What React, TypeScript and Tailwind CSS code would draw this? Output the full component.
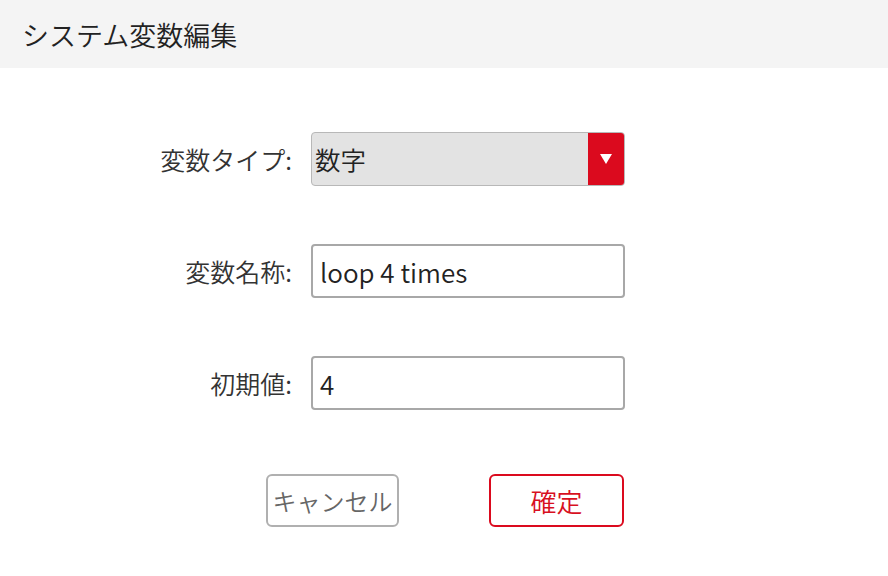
import React from "react";

const font = { fontFamily: '"Noto Sans CJK JP", "Noto Sans", sans-serif' };

function Row({ label, children }: { label: string; children: React.ReactNode }) {
  return (
    <div className="flex items-center">
      <div className="w-[292px] text-right text-[25px] font-[350] leading-none text-[#333]">{label}</div>
      <div className="ml-[19px] w-[314px] h-[54px]">{children}</div>
    </div>
  );
}

export default function App() {
  return (
    <div className="w-[888px] h-[576px] bg-white" style={font}>
      {/* Header */}
      <div className="h-[68px] bg-[#f4f4f4] flex items-center pl-[22px]">
        <span className="text-[27px] font-[350] text-[#222] leading-none">システム変数編集</span>
      </div>

      {/* Form */}
      <div className="mt-[64px] flex flex-col gap-[58px]">
        <Row label="変数タイプ:">
          <div className="flex h-full rounded-[4px] border border-[#b8b8b8] bg-[#e3e3e3] overflow-hidden">
            <div className="flex-1 flex items-center pl-[3px] text-[25.5px] font-[350] text-[#222]">数字</div>
            <div className="w-[36px] bg-[#db0a1e] flex items-center justify-center">
              <svg width="12" height="10" viewBox="0 0 12 10">
                <polygon points="0,0 12,0 6,10" fill="#fff" />
              </svg>
            </div>
          </div>
        </Row>
        <Row label="変数名称:">
          <div className="flex items-center h-full rounded-[4px] border-2 border-[#a8a8a8] bg-white pl-[7px] text-[26px] font-[350] text-[#222]">
            loop 4 times
          </div>
        </Row>
        <Row label="初期値:">
          <div className="flex items-center h-full rounded-[4px] border-2 border-[#a8a8a8] bg-white pl-[7px] text-[26px] font-[350] text-[#222]">
            4
          </div>
        </Row>
      </div>

      {/* Buttons */}
      <div className="mt-[64px] flex">
        <button className="ml-[266px] w-[133px] h-[53px] rounded-[6px] border-2 border-[#b0b0b0] bg-white text-[24px] font-[350] text-[#666]">
          キャンセル
        </button>
        <button className="ml-[90px] w-[135px] h-[53px] rounded-[6px] border-2 border-[#db0a1e] bg-white text-[26px] font-[350] text-[#d8101f]">
          確定
        </button>
      </div>
    </div>
  );
}
